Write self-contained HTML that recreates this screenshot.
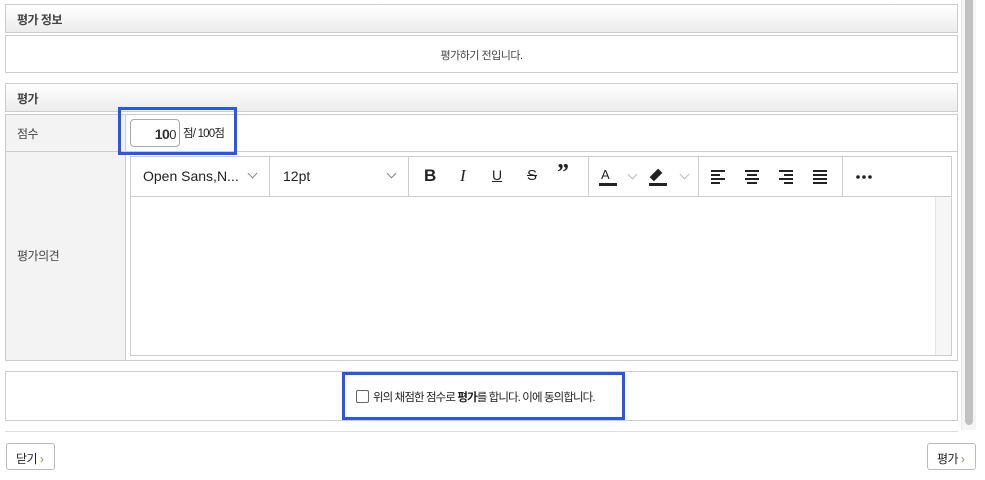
<!DOCTYPE html>
<html><head><meta charset="utf-8"><style>
*{box-sizing:border-box;margin:0;padding:0}
body{width:985px;height:480px;background:#fff;position:relative;overflow:hidden;font-family:"Liberation Sans","Noto Sans CJK KR",sans-serif;font-size:12px;color:#333;letter-spacing:-0.5px}
.a{position:absolute}
.hd{background:linear-gradient(#fff,#ececec);border:1px solid #ccc;font-weight:bold;font-size:12px;padding:6px 0 0 11px;color:#444}
.bx{border:1px solid #ccc}
.lab{background:#f3f3f3;border-right:1px solid #ccc;color:#444}
.sep{position:absolute;top:0;width:1px;height:39px;background:#ccc}
.ic{position:absolute;top:9px;font-size:17px;color:#222;font-weight:bold;letter-spacing:0}
.btn{border:1px solid #bbb;border-radius:3px;background:#fff;font-size:12px;padding:6px 0 0 9px;color:#222}
.btn b{color:#a08a2a;font-weight:normal}
.blue{border:3px solid #2a55f5}
.chev{position:absolute;width:7px;height:7px;border-right:1px solid #888;border-bottom:1px solid #888;transform:rotate(45deg)}
</style></head><body>
<div class="a hd" style="left:5px;top:4px;width:953px;height:29px">평가 정보</div>
<div class="a bx" style="left:5px;top:35px;width:953px;height:38px;text-align:center;padding-top:11px;font-size:11px;color:#444">평가하기 전입니다.</div>
<div class="a hd" style="left:5px;top:83px;width:953px;height:29px">평가</div>
<div class="a bx" style="left:5px;top:114px;width:953px;height:247px"></div>
<div class="a lab" style="left:6px;top:115px;width:120px;height:36px;padding:10px 0 0 11px">점수</div>
<div class="a" style="left:6px;top:151px;width:951px;height:1px;background:#ccc"></div>
<div class="a lab" style="left:6px;top:152px;width:120px;height:208px;padding:95px 0 0 11px">평가의견</div>
<div class="a" style="left:130px;top:119px;width:50px;height:28px;border:1px solid #aaa;border-radius:4px;text-align:right;padding:6px 3px 0 0;font-size:13px"><b style="font-size:14px">10</b>0</div>
<div class="a" style="left:183px;top:125px;font-size:11.5px;color:#222;letter-spacing:-0.8px">점/ 100점</div>
<div class="a blue" style="left:118px;top:107px;width:119px;height:48px"></div>
<div class="a bx" style="left:130px;top:156px;width:822px;height:200px;letter-spacing:0">
 <div style="position:absolute;left:0;top:39px;width:820px;height:1px;background:#ccc"></div>
 <div style="position:absolute;right:0;top:40px;width:16px;height:158px;background:#f6f6f6;border-left:1px solid #e5e5e5"></div>
 <div class="a" style="left:12px;top:11px;font-size:14px;color:#222">Open Sans,N...</div>
 <div class="chev" style="left:118px;top:13px"></div>
 <div class="sep" style="left:138px"></div>
 <div class="a" style="left:152px;top:11px;font-size:14px;color:#222">12pt</div>
 <div class="chev" style="left:257px;top:13px"></div>
 <div class="sep" style="left:277px"></div>
 <div class="ic" style="left:293px">B</div>
 <div class="ic" style="left:329px;font-family:'Liberation Serif';font-style:italic;font-weight:normal">I</div>
 <div class="ic" style="left:361px;font-size:14px;text-decoration:underline;font-weight:normal;top:10px">U</div>
 <div class="ic" style="left:396px;font-size:15px;text-decoration:line-through;font-weight:normal;top:10px">S</div>
 <div class="ic" style="left:426px;font-size:24px;top:3px;font-family:'Liberation Serif'">”</div>
 <div class="sep" style="left:457px"></div>
 <div class="ic" style="left:470px;font-size:13px;font-weight:normal;top:10px">A</div>
 <div class="a" style="left:468px;top:26px;width:18px;height:3px;background:#222"></div>
 <div class="chev" style="left:498px;top:14px;border-color:#bbb"></div>
 <div class="a" style="left:522px;top:12px;width:6px;height:12px;background:#222;transform:rotate(45deg)"></div>
 <div class="a" style="left:518px;top:26px;width:18px;height:3px;background:#222"></div>
 <div class="chev" style="left:550px;top:14px;border-color:#bbb"></div>
 <div class="sep" style="left:567px"></div>
 <svg class="a" style="left:580px;top:12px" width="120" height="16"><g fill="#222">
 <rect x="0" y="1" width="14" height="2"/><rect x="0" y="5" width="9" height="2"/><rect x="0" y="9" width="14" height="2"/><rect x="0" y="13" width="9" height="2"/>
 <rect x="34" y="1" width="14" height="2"/><rect x="36" y="5" width="10" height="2"/><rect x="34" y="9" width="14" height="2"/><rect x="36" y="13" width="10" height="2"/>
 <rect x="68" y="1" width="14" height="2"/><rect x="73" y="5" width="9" height="2"/><rect x="68" y="9" width="14" height="2"/><rect x="73" y="13" width="9" height="2"/>
 <rect x="102" y="1" width="14" height="2"/><rect x="102" y="5" width="14" height="2"/><rect x="102" y="9" width="14" height="2"/><rect x="102" y="13" width="14" height="2"/>
 </g></svg>
 <div class="sep" style="left:711px"></div>
 <svg class="a" style="left:725px;top:18px" width="20" height="4"><g fill="#222"><circle cx="2" cy="2" r="1.8"/><circle cx="8" cy="2" r="1.8"/><circle cx="14" cy="2" r="1.8"/></g></svg>
</div>
<div class="a bx" style="left:5px;top:371px;width:953px;height:50px"></div>
<div class="a" style="left:356px;top:390px;width:13px;height:13px;border:1px solid #666;border-radius:2px"></div>
<div class="a" style="left:373px;top:389px;font-size:11.5px;color:#222;letter-spacing:-0.9px;white-space:nowrap">위의 채점한 점수로 <b>평가</b>를 합니다. 이에 동의합니다.</div>
<div class="a blue" style="left:342px;top:372px;width:283px;height:48px"></div>
<div class="a" style="left:5px;top:431px;width:953px;height:1px;background:#ddd"></div>
<div class="a btn" style="left:6px;top:443px;width:49px;height:27px">닫기 <b>›</b></div>
<div class="a btn" style="left:927px;top:443px;width:49px;height:27px">평가 <b>›</b></div>
<div class="a" style="left:961px;top:0;width:15px;height:430px;background:#f5f5f5;border-left:1px solid #e8e8e8"></div>
<div class="a" style="left:965px;top:0;width:8px;height:425px;background:#c1c1c1;border-radius:0 0 4px 4px"></div>
</body></html>
